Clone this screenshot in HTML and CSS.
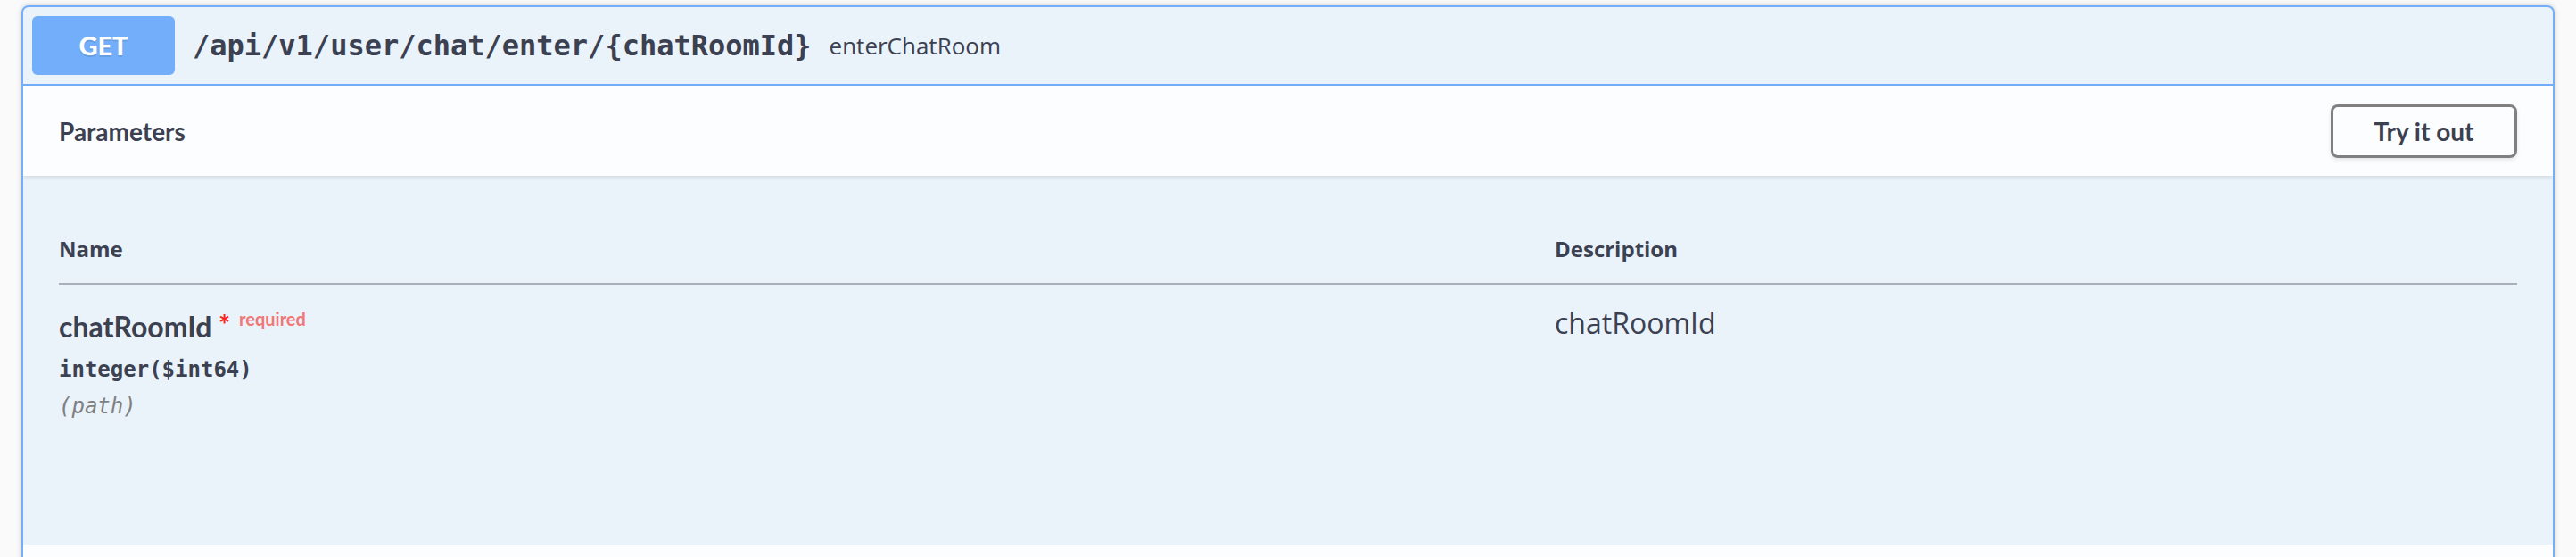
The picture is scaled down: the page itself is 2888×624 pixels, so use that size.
FILE: index.html
```html
<!DOCTYPE html>
<html lang="en">
<head>
<meta charset="utf-8">
<title>enterChatRoom</title>
<link rel="stylesheet" href="styles.css">
</head>
<body>
<div class="page">
  <div class="opblock">
    <div class="summary">
      <span class="method">GET</span>
      <span class="path">/api/v1/user/chat/enter/{chatRoomId}</span>
      <span class="summary-desc">enterChatRoom</span>
    </div>
    <div class="section-header">
      <h4 class="section-title">Parameters</h4>
      <button class="btn" type="button">Try it out</button>
    </div>
    <div class="table-container">
      <div class="params">
        <div class="th">Name</div>
        <div class="th">Description</div>
        <div class="td name-cell">
          <div class="pname">chatRoomId<span class="star">*</span><span class="req">required</span></div>
          <div class="ptype">integer($int64)</div>
          <div class="pin">(path)</div>
        </div>
        <div class="td desc-cell">chatRoomId</div>
      </div>
    </div>
    <div class="section-header next"></div>
  </div>
</div>
</body>
</html>
```
FILE: styles.css
```css
html, body {
  margin: 0;
  padding: 0;
  background: #fafafa;
  overflow: hidden;
}

.page {
  padding: 6px 24px 0 24px;
  color: #3b4151;
}

.opblock {
  border: 2px solid #72aef9;
  border-radius: 8px;
  background: rgba(97, 175, 254, 0.1);
  box-shadow: 0 0 6px rgba(0, 0, 0, 0.19);
  overflow: hidden;
}

.summary {
  display: flex;
  align-items: center;
  padding: 10px;
  border-bottom: 2px solid #72aef9;
}

.method {
  width: 160px;
  height: 66px;
  line-height: 66px;
  text-align: center;
  background: #72aef9;
  color: #fff;
  border-radius: 6px;
  font-family: Lato, "Open Sans", sans-serif;
  font-weight: 900;
  font-size: 29px;
  text-shadow: 0 2px 0 rgba(0, 0, 0, 0.1);
}

.path {
  padding: 0 20px;
  font-family: "DejaVu Sans Mono", monospace;
  font-weight: 700;
  font-size: 32px;
  color: #3b4151;
}

.summary-desc {
  font-family: "Open Sans", sans-serif;
  font-size: 26px;
  color: #3b4151;
}

.section-header {
  display: flex;
  align-items: center;
  justify-content: space-between;
  box-sizing: border-box;
  min-height: 101px;
  padding: 16px 40px;
  background: rgba(255, 255, 255, 0.8);
  box-shadow: 0 2px 4px rgba(0, 0, 0, 0.1);
}

.section-header.next {
  box-shadow: none;
  min-height: 60px;
}

.section-title {
  margin: 0;
  font-family: Lato, "Open Sans", sans-serif;
  font-weight: 700;
  font-size: 28px;
  color: #3b4151;
}

.btn {
  box-sizing: border-box;
  width: 209px;
  height: 60px;
  padding: 0;
  background: transparent;
  border: 3px solid #808080;
  border-radius: 8px;
  box-shadow: 0 2px 4px rgba(0, 0, 0, 0.1);
  font-family: Lato, "Open Sans", sans-serif;
  font-weight: 700;
  font-size: 28px;
  color: #3b4151;
}

.table-container {
  padding: 40px 40px 101px 40px;
}

.params {
  display: grid;
  grid-template-columns: 1677px 1fr;
}

.th {
  padding: 26px 0 22px 0;
  line-height: 32px;
  font-family: "Open Sans", sans-serif;
  font-weight: 700;
  font-size: 24px;
  color: #3b4151;
  border-bottom: 2px solid #a9afba;
}

.td {
  padding-bottom: 40px;
}

.name-cell {
  padding-top: 19px;
}

.pname {
  line-height: 38px;
  font-family: Lato, "Open Sans", sans-serif;
  font-weight: 700;
  font-size: 32px;
  color: #3b4151;
}

.star {
  margin-left: 8px;
  font-size: 30px;
  font-weight: 900;
  color: #f22;
  vertical-align: 3px;
}

.req {
  margin-left: 10px;
  font-size: 20px;
  color: #f07878;
  vertical-align: 13px;
}

.ptype {
  margin-top: 15px;
  line-height: 28px;
  font-family: "DejaVu Sans Mono", monospace;
  font-weight: 700;
  font-size: 24px;
  color: #3b4151;
}

.pin {
  margin-top: 13px;
  line-height: 28px;
  font-family: "DejaVu Sans Mono", monospace;
  font-style: italic;
  font-size: 24px;
  color: #808080;
}

.desc-cell {
  padding-top: 21px;
  line-height: 44px;
  font-family: "Open Sans", sans-serif;
  font-size: 32px;
  color: #3b4151;
}
```
